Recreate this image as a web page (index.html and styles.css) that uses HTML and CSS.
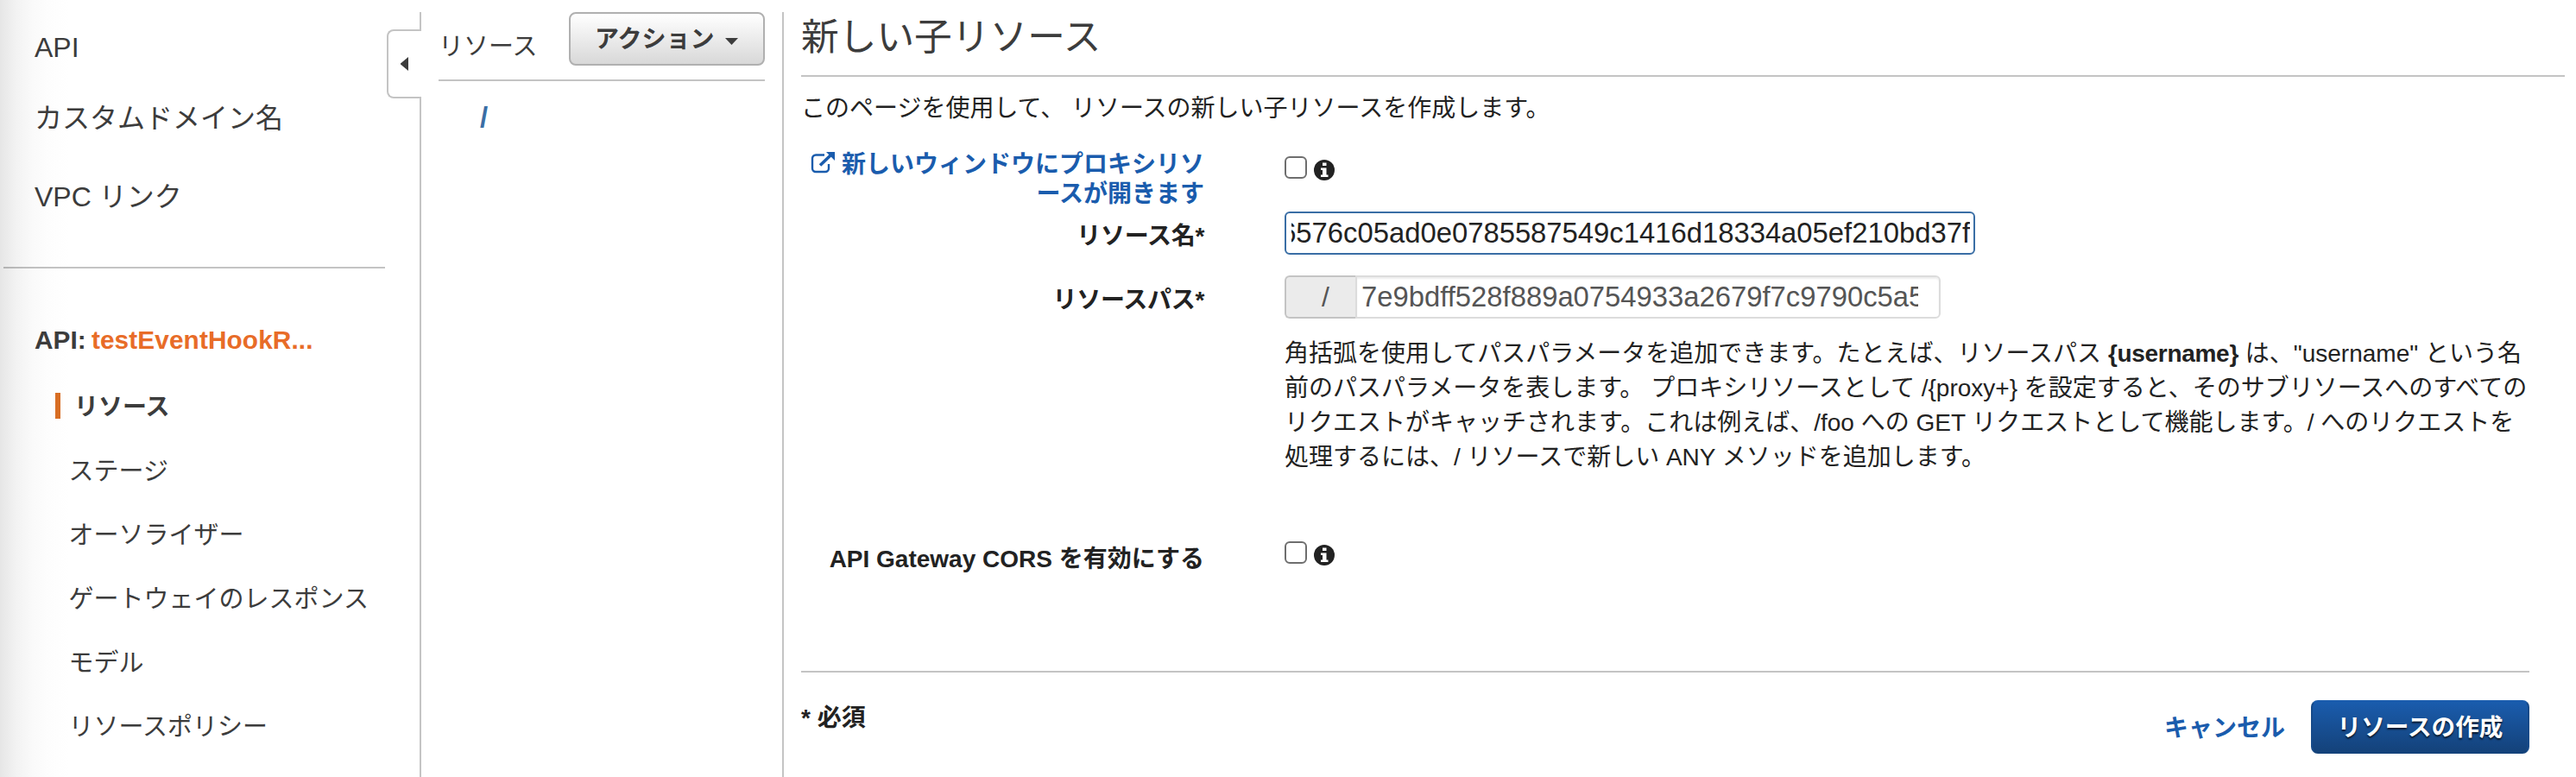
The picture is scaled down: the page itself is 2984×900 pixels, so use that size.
FILE: index.html
```html
<!DOCTYPE html>
<html lang="ja">
<head>
<meta charset="utf-8">
<title>API Gateway</title>
<link rel="stylesheet" href="styles.css">
</head>
<body>
<div class="app">
  <aside class="sidebar">
    <nav class="nav">
      <a class="top-item first">API</a>
      <a class="top-item second">カスタムドメイン名</a>
      <a class="top-item third">VPC リンク</a>
      <hr class="nav-rule">
      <div class="api-name">API: <span class="api-link">testEventHookR...</span></div>
      <ul class="sub-list">
        <li class="sub-item active">リソース</li>
        <li class="sub-item">ステージ</li>
        <li class="sub-item">オーソライザー</li>
        <li class="sub-item">ゲートウェイのレスポンス</li>
        <li class="sub-item">モデル</li>
        <li class="sub-item">リソースポリシー</li>
      </ul>
    </nav>
    <div class="edge">
      <div class="edge-top"></div>
      <div class="edge-tab"><svg width="9" height="16" viewBox="0 0 9 16"><path d="M9 0v16L0 8.600V7.400z" fill="#3c3c3c"/></svg></div>
      <div class="edge-rest"></div>
    </div>
  </aside>
  <section class="tree">
    <div class="tree-head">
      <span class="tree-title">リソース</span>
      <button class="action-button"><span class="action-text">アクション</span><svg width="15" height="8" viewBox="0 0 15 8"><path d="M0 0h15L7.500 8z" fill="#3c3c3c"/></svg></button>
    </div>
    <div class="root">/</div>
  </section>
  <main class="main">
    <h1 class="title">新しい子リソース</h1>
    <p class="intro">このページを使用して、 リソースの新しい子リソースを作成します。</p>
    <div class="row proxy">
      <div class="label link"><svg class="external" width="29" height="25" viewBox="0 0 29 25"><path d="M16 3.500H6A4 4 0 0 0 2 7.500V19a4 4 0 0 0 4 4h11a4 4 0 0 0 4-4v-5" fill="none" stroke="#1a5cad" stroke-width="2.400"/><path d="M11 15.500 23 4" stroke="#1a5cad" stroke-width="3.600"/><path d="M18 0h10v10z" fill="#1a5cad"/></svg>新しいウィンドウにプロキシリソ<br>ースが開きます</div>
      <div class="field checks"><span class="checkbox"></span><svg class="info" width="24" height="24" viewBox="0 0 24 24"><circle cx="12" cy="12" r="12" fill="#222"/><path d="M10 3.500h4.500v3.500H10zM8 9.500h6.500v8H16.500V20H8v-2.500h2V12H8z" fill="#fff"/></svg></div>
    </div>
    <div class="row name">
      <div class="label">リソース名*</div>
      <div class="field"><div class="input focus"><div class="clip end"><span>6576c05ad0e0785587549c1416d18334a05ef210bd37f</span></div></div></div>
    </div>
    <div class="row path">
      <div class="label">リソースパス*</div>
      <div class="field">
        <div class="group"><span class="addon">/</span><div class="input grouped"><div class="clip"><span>7e9bdff528f889a0754933a2679f7c9790c5a5</span></div></div></div>
        <p class="help">角括弧を使用してパスパラメータを追加できます。たとえば、リソースパス <b>{username}</b> は、"username" という名<br>前のパスパラメータを表します。 プロキシリソースとして /{proxy+} を設定すると、そのサブリソースへのすべての<br>リクエストがキャッチされます。これは例えば、/foo への GET リクエストとして機能します。/ へのリクエストを<br>処理するには、/ リソースで新しい ANY メソッドを追加します。</p>
      </div>
    </div>
    <div class="row cors">
      <div class="label">API Gateway CORS を有効にする</div>
      <div class="field checks"><span class="checkbox"></span><svg class="info" width="24" height="24" viewBox="0 0 24 24"><circle cx="12" cy="12" r="12" fill="#222"/><path d="M10 3.500h4.500v3.500H10zM8 9.500h6.500v8H16.500V20H8v-2.500h2V12H8z" fill="#fff"/></svg></div>
    </div>
    <footer class="footer">
      <div class="required">* 必須</div>
      <div class="buttons"><a class="cancel">キャンセル</a><button class="create">リソースの作成</button></div>
    </footer>
  </main>
</div>
</body>
</html>
```

FILE: styles.css
```css
* { box-sizing: border-box; }
body {
  margin: 0;
  background: #fff;
  color: #222;
  font-family: "Liberation Sans", "Noto Sans CJK JP", sans-serif;
  font-size: 28px;
  overflow: hidden;
}
.app { display: flex; height: 900px; white-space: nowrap; }
.sidebar {
  display: flex;
  width: 488px;
  color: #3c3c3c;
  background: linear-gradient(to right, #e6e6e6 0, #f2f2f2 18px, #fafafa 38px, #fdfdfd 55px, #fff 80px);
}
.nav { width: 448px; }
.top-item { display: block; padding-left: 40px; height: 40px; line-height: 40px; font-size: 32px; }
.first { margin-top: 35px; }
.second { margin-top: 42px; }
.third { margin-top: 51px; }
.nav-rule { height: 2px; margin: 61px 2px 0 4px; border: 0; background: rgba(0, 0, 0, .23); }
.api-name { margin-top: 63px; padding-left: 40px; height: 40px; line-height: 40px; font-size: 29.800px; font-weight: bold; word-spacing: -2px; }
.api-link { color: #e86c28; letter-spacing: .1px; }
.sub-list { list-style: none; margin: 18px 0 0; padding: 0; }
.sub-item { display: flex; align-items: center; height: 74px; padding-left: 79.500px; font-size: 29px; }
.active { font-weight: bold; font-size: 28px; padding-left: 64px; }
.active::before { content: ""; width: 6px; height: 30px; margin: 2px 16px 0 0; background: #d86e24; }
.edge { width: 40px; display: flex; flex-direction: column; padding-top: 14px; }
.edge-top { height: 21px; border-right: 2px solid #c4c4c4; }
.edge-tab {
  height: 80px;
  margin-top: -1px;
  border: 2px solid #c4c4c4;
  border-right: 0;
  border-radius: 8px 0 0 8px;
  display: flex;
  align-items: center;
  padding-left: 14px;
}
.edge-rest { flex: 1; margin-top: -1px; border-right: 2px solid #c4c4c4; }
.tree { width: 420px; margin-top: 14px; padding: 0 20px; border-right: 2px solid #c4c4c4; }
.tree-head { display: flex; justify-content: space-between; height: 80px; border-bottom: 2px solid #c4c4c4; color: #3c3c3c; }
.tree-title { padding: 20px 0 0; height: 60px; line-height: 40px; font-size: 29px; }
.action-button {
  display: flex;
  align-items: center;
  width: 227px;
  height: 62px;
  padding: 0 0 0 28px;
  border: 2px solid #b0b0b0;
  border-radius: 8px;
  background: linear-gradient(#fff, #d8d8d8);
  color: #3c3c3c;
  font: bold 28px "Liberation Sans", "Noto Sans CJK JP", sans-serif;
}
.action-text { margin: -4px 12px 0 0; }
.action-button svg { margin-top: 5px; }
.root { margin: 22px 0 0 48px; line-height: 40px; font-size: 33px; font-weight: bold; color: #3a6ea5; }
.main { flex: 1; padding: 0 13px 0 20px; }
.title { margin: 0; height: 89px; line-height: 85px; border-bottom: 2px solid #c4c4c4; font-weight: normal; font-size: 43.700px; color: #3c3c3c; }
.intro { margin: 17px 0 0; height: 40px; line-height: 40px; }
.row { display: flex; }
.label { width: 467px; text-align: right; font-weight: bold; }
.field { margin-left: 93px; }
.proxy { padding-top: 27px; height: 99px; }
.link { padding-top: 1px; line-height: 34px; color: #1a5cad; }
.external { margin-right: 7px; vertical-align: -1px; }
.checks { display: flex; padding-top: 8px; }
.checkbox { width: 26px; height: 26px; border: 2px solid #6e6e6e; border-radius: 6px; margin-right: 8px; }
.info { margin-top: 4px; }
.name { height: 74px; line-height: 58px; }
.name .label, .path .label { letter-spacing: -.3px; }
.input { width: 800px; height: 50px; border: 2px solid #dcdcdc; border-radius: 6px; font-size: 32.800px; line-height: 46px; }
.focus { border-color: #3a6ea5; padding: 0 4px 0 6px; }
.clip { overflow: hidden; height: 46px; display: flex; }
.end { justify-content: flex-end; }
.name .clip, .name .input { line-height: 46px; }
.path { height: 308px; }
.path .label { line-height: 58px; }
.group { display: flex; width: 760px; height: 50px; color: #555; }
.addon { width: 82px; padding-left: 41px; border: 2px solid #c4c4c4; border-right: 0; border-radius: 6px 0 0 6px; background: #ebebeb; font-size: 32px; line-height: 46px; }
.grouped { width: 678px; border-radius: 0 6px 6px 0; padding: 0 24px 0 5px; box-shadow: inset 0 2px 2px rgba(0, 0, 0, .07); }
.help { margin: 21px 0 0; line-height: 40px; }
.help b { letter-spacing: -.3px; }
.cors { height: 150px; }
.cors .label { line-height: 42px; }
.cors .checks { padding-top: 0; }
.footer { display: flex; justify-content: space-between; margin-right: 41px; border-top: 2px solid #c4c4c4; }
.required { padding-top: 33px; line-height: 40px; font-weight: bold; }
.buttons { display: flex; align-items: center; height: 62px; margin-top: 32px; font-weight: bold; }
.cancel { margin: -3px 30px 0 0; color: #1a5cad; }
.create {
  width: 253px;
  height: 62px;
  padding: 0 0 5px;
  border: 2px solid #164a89;
  border-radius: 8px;
  border-top-color: #1a5cad;
  border-bottom-color: #14427a;
  background: linear-gradient(#1a5cad, #14427a);
  color: #fff;
  font: bold 27.600px "Liberation Sans", "Noto Sans CJK JP", sans-serif;
  text-shadow: 0 2px 2px rgba(0, 0, 0, .7);
}
```
